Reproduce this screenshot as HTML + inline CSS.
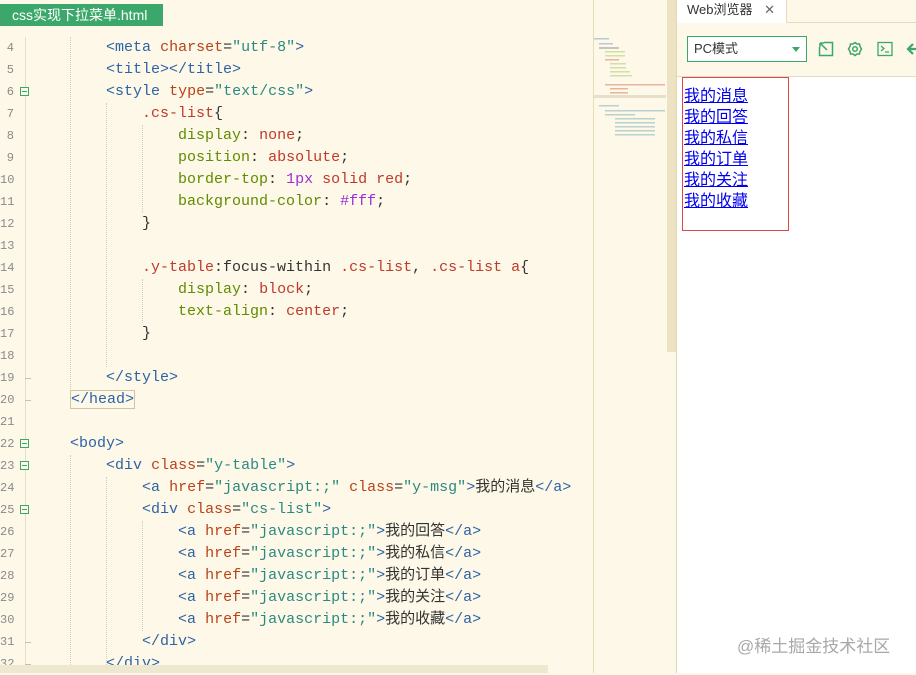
<!DOCTYPE html>
<html><head><meta charset="utf-8"><style>
*{margin:0;padding:0;box-sizing:border-box}
body{width:916px;height:673px;overflow:hidden;background:#fdf8e7;position:relative;font-family:"Liberation Sans","Noto Sans CJK SC",sans-serif}
.tab{position:absolute;left:0;top:4px;width:163px;height:22px;background:#3ca76a;color:#fff;font-size:14px;line-height:22px;padding-left:12px}
.gut{position:absolute;left:25px;top:37px;width:1px;height:636px;background:#e6dfc4}
.ln{position:absolute;left:0;width:14px;text-align:right;font-family:"Liberation Mono",monospace;font-size:12px;color:#8a8a8a}
.fold{position:absolute;left:20px;width:9px;height:9px;border:1px solid #3ca76a;background:#fdf8e7}
.fold:after{content:"";position:absolute;left:1px;top:3px;width:5px;height:1px;background:#3ca76a}
.tk{position:absolute;left:25px;width:6px;height:1px;background:#c8c2a8}
.code{position:absolute;left:-2px;white-space:pre;font-family:"Liberation Mono","Noto Sans CJK SC",monospace;font-size:15px;color:#333;height:22px;line-height:22px}
.g{position:absolute;width:0;border-left:1px dotted #d6cfb4}
.t{color:#2d63a6}.a{color:#b8431a}.s{color:#2a8a83}.p{color:#5f8c00}.v{color:#c0392b}.n{color:#9b30d9}.sel{color:#c0392b}
.mini{position:absolute;left:593px;top:0;width:1px;height:673px;background:#e5ddb8}
.vs{position:absolute;left:667px;top:0;width:9px;height:352px;background:#ede3c2}
.hs{position:absolute;left:0;top:665px;width:548px;height:8px;background:#efe8d0}
.rp{position:absolute;left:676px;top:0;width:240px;height:673px;background:#fff;border-left:1px solid #e0d8b4}
.rh{position:absolute;left:0;top:0;width:240px;height:77px;background:#fdf8e7;border-bottom:1px solid #e3dcc0}
.rt{position:absolute;left:0;top:0;width:109px;height:23px;background:#fff;font-size:13px;line-height:19px;padding-left:10px;color:#333}
.rt2{position:absolute;left:109px;top:0;right:0;height:23px;border-bottom:1px solid #e3dcc0;border-left:1px solid #e3dcc0}
.selb{position:absolute;left:10px;top:36px;width:120px;height:26px;border:1px solid #3ca76a;background:#fff;font-size:13px;line-height:24px;padding-left:6px;color:#333}
.selb:after{content:"";position:absolute;right:6px;top:10px;border:4px solid transparent;border-top:5px solid #3ca76a}
.box{position:absolute;left:5px;top:77px;width:107px;height:154px;border:1px solid #e04848}
.links{position:absolute;left:7px;top:86px;font-family:"Liberation Sans","Noto Sans CJK SC",sans-serif;font-size:16px;line-height:21px}
.links a{display:block;color:#0000ee;text-decoration:underline}
.wm{position:absolute;left:737px;top:632px;font-size:17px;color:#a8a8a8}
</style></head><body>
<div class="tab">css实现下拉菜单.html</div>
<div class="gut"></div>
<div class="g" style="left:70px;top:37px;height:352px"></div>
<div class="g" style="left:106px;top:103px;height:264px"></div>
<div class="g" style="left:142px;top:125px;height:88px"></div>
<div class="g" style="left:142px;top:279px;height:44px"></div>
<div class="g" style="left:70px;top:455px;height:218px"></div>
<div class="g" style="left:106px;top:477px;height:196px"></div>
<div class="g" style="left:142px;top:521px;height:110px"></div>

<div class="ln" style="top:41px">4</div><div class="code" style="top:37px">            <span class="t">&lt;meta</span> <span class="a">charset</span>=<span class="s">"utf-8"</span><span class="t">&gt;</span></div>
<div class="ln" style="top:63px">5</div><div class="code" style="top:59px">            <span class="t">&lt;title&gt;&lt;/title&gt;</span></div>
<div class="ln" style="top:85px">6</div><div class="fold" style="top:87px"></div><div class="code" style="top:81px">            <span class="t">&lt;style</span> <span class="a">type</span>=<span class="s">"text/css"</span><span class="t">&gt;</span></div>
<div class="ln" style="top:107px">7</div><div class="code" style="top:103px">                <span class="sel">.cs-list</span>{</div>
<div class="ln" style="top:129px">8</div><div class="code" style="top:125px">                    <span class="p">display</span>: <span class="v">none</span>;</div>
<div class="ln" style="top:151px">9</div><div class="code" style="top:147px">                    <span class="p">position</span>: <span class="v">absolute</span>;</div>
<div class="ln" style="top:173px">10</div><div class="code" style="top:169px">                    <span class="p">border-top</span>: <span class="n">1px</span> <span class="v">solid</span> <span class="v">red</span>;</div>
<div class="ln" style="top:195px">11</div><div class="code" style="top:191px">                    <span class="p">background-color</span>: <span class="n">#fff</span>;</div>
<div class="ln" style="top:217px">12</div><div class="code" style="top:213px">                }</div>
<div class="ln" style="top:239px">13</div>
<div class="ln" style="top:261px">14</div><div class="code" style="top:257px">                <span class="sel">.y-table</span>:focus-within <span class="sel">.cs-list</span>, <span class="sel">.cs-list</span> <span class="sel">a</span>{</div>
<div class="ln" style="top:283px">15</div><div class="code" style="top:279px">                    <span class="p">display</span>: <span class="v">block</span>;</div>
<div class="ln" style="top:305px">16</div><div class="code" style="top:301px">                    <span class="p">text-align</span>: <span class="v">center</span>;</div>
<div class="ln" style="top:327px">17</div><div class="code" style="top:323px">                }</div>
<div class="ln" style="top:349px">18</div>
<div class="ln" style="top:371px">19</div><div class="tk" style="top:378px"></div><div class="code" style="top:367px">            <span class="t">&lt;/style&gt;</span></div>
<div class="ln" style="top:393px">20</div><div class="tk" style="top:400px"></div><div class="code" style="top:389px">        <span class="t" style="border:1px solid #ccc5a8">&lt;/head&gt;</span></div>
<div class="ln" style="top:415px">21</div>
<div class="ln" style="top:437px">22</div><div class="fold" style="top:439px"></div><div class="code" style="top:433px">        <span class="t">&lt;body&gt;</span></div>
<div class="ln" style="top:459px">23</div><div class="fold" style="top:461px"></div><div class="code" style="top:455px">            <span class="t">&lt;div</span> <span class="a">class</span>=<span class="s">"y-table"</span><span class="t">&gt;</span></div>
<div class="ln" style="top:481px">24</div><div class="code" style="top:477px">                <span class="t">&lt;a</span> <span class="a">href</span>=<span class="s">"javascript:;"</span> <span class="a">class</span>=<span class="s">"y-msg"</span><span class="t">&gt;</span>我的消息<span class="t">&lt;/a&gt;</span></div>
<div class="ln" style="top:503px">25</div><div class="fold" style="top:505px"></div><div class="code" style="top:499px">                <span class="t">&lt;div</span> <span class="a">class</span>=<span class="s">"cs-list"</span><span class="t">&gt;</span></div>
<div class="ln" style="top:525px">26</div><div class="code" style="top:521px">                    <span class="t">&lt;a</span> <span class="a">href</span>=<span class="s">"javascript:;"</span><span class="t">&gt;</span>我的回答<span class="t">&lt;/a&gt;</span></div>
<div class="ln" style="top:547px">27</div><div class="code" style="top:543px">                    <span class="t">&lt;a</span> <span class="a">href</span>=<span class="s">"javascript:;"</span><span class="t">&gt;</span>我的私信<span class="t">&lt;/a&gt;</span></div>
<div class="ln" style="top:569px">28</div><div class="code" style="top:565px">                    <span class="t">&lt;a</span> <span class="a">href</span>=<span class="s">"javascript:;"</span><span class="t">&gt;</span>我的订单<span class="t">&lt;/a&gt;</span></div>
<div class="ln" style="top:591px">29</div><div class="code" style="top:587px">                    <span class="t">&lt;a</span> <span class="a">href</span>=<span class="s">"javascript:;"</span><span class="t">&gt;</span>我的关注<span class="t">&lt;/a&gt;</span></div>
<div class="ln" style="top:613px">30</div><div class="code" style="top:609px">                    <span class="t">&lt;a</span> <span class="a">href</span>=<span class="s">"javascript:;"</span><span class="t">&gt;</span>我的收藏<span class="t">&lt;/a&gt;</span></div>
<div class="ln" style="top:635px">31</div><div class="tk" style="top:642px"></div><div class="code" style="top:631px">                <span class="t">&lt;/div&gt;</span></div>
<div class="ln" style="top:657px">32</div><div class="tk" style="top:664px"></div><div class="code" style="top:653px">            <span class="t">&lt;/div&gt;</span></div>
<div class="hs"></div>

<div class="mini"></div>
<svg style="position:absolute;left:594px;top:36px" width="72" height="104">
<g fill="#b9c7d8"><rect x="0" y="2" width="15" height="1.5"/><rect x="5" y="7" width="14" height="1.5"/></g>
<rect x="5" y="11" width="20" height="2" fill="#c9c4b8"/>
<g fill="#cfe0a8"><rect x="11" y="15" width="20" height="1.5"/><rect x="11" y="19" width="20" height="1.5"/><rect x="16" y="27" width="16" height="1.5"/><rect x="16" y="31" width="16" height="1.5"/><rect x="16" y="35" width="20" height="1.5"/><rect x="16" y="39" width="22" height="1.5"/></g>
<g fill="#e8b49c"><rect x="11" y="23" width="14" height="1.5"/><rect x="11" y="48" width="60" height="1.5"/><rect x="16" y="52" width="18" height="1.5"/><rect x="16" y="56" width="18" height="1.5"/></g>
<rect x="0" y="59" width="72" height="3" fill="#e6dfcc"/>
<g fill="#b9d2cf"><rect x="5" y="69" width="20" height="1.5"/><rect x="11" y="74" width="60" height="1.5"/><rect x="11" y="78" width="30" height="1.5"/><rect x="21" y="82" width="40" height="1.5"/><rect x="21" y="86" width="40" height="1.5"/><rect x="21" y="90" width="40" height="1.5"/><rect x="21" y="94" width="40" height="1.5"/><rect x="21" y="98" width="40" height="1.5"/></g>
</svg>
<div class="vs"></div>

<div class="rp">
<div class="rh">
<div class="rt">Web浏览器 <span style="margin-left:8px;color:#666">✕</span></div>
<div class="rt2"></div>
<div class="selb">PC模式</div>
<svg style="position:absolute;left:141px;top:41px" width="16" height="16" fill="none" stroke="#3ca76a" stroke-width="1.5"><path d="M6 1.5H14.5V14.5H1.5V6"/><path d="M2 2L9 9M2 2V6M2 2H6"/></svg>
<svg style="position:absolute;left:170px;top:41px" width="16" height="16" fill="none" stroke="#3ca76a" stroke-width="1.5"><path d="M8 1.5l2 1.5 2.5 0 .5 2.5 1.5 2.5-1.5 2.5-.5 2.5-2.5 0L8 14.5l-2-1.5-2.5 0-.5-2.5L1.5 8 3 5.5l.5-2.5 2.5 0z"/><circle cx="8" cy="8" r="2.3"/></svg>
<svg style="position:absolute;left:200px;top:41px" width="16" height="16" fill="none" stroke="#3ca76a" stroke-width="1.3"><rect x="1" y="1.5" width="14" height="13"/><path d="M4 5l3 2.5-3 2.5M8 11h4"/></svg>
<svg style="position:absolute;left:229px;top:41px" width="12" height="16" fill="none" stroke="#3ca76a" stroke-width="2.2"><path d="M7 3L2 8l5 5M2 8h10"/></svg>
</div>
<div class="box"></div>
<div class="links"><a>我的消息</a><a>我的回答</a><a>我的私信</a><a>我的订单</a><a>我的关注</a><a>我的收藏</a></div>
</div>
<div class="wm">@稀土掘金技术社区</div>
</body></html>
